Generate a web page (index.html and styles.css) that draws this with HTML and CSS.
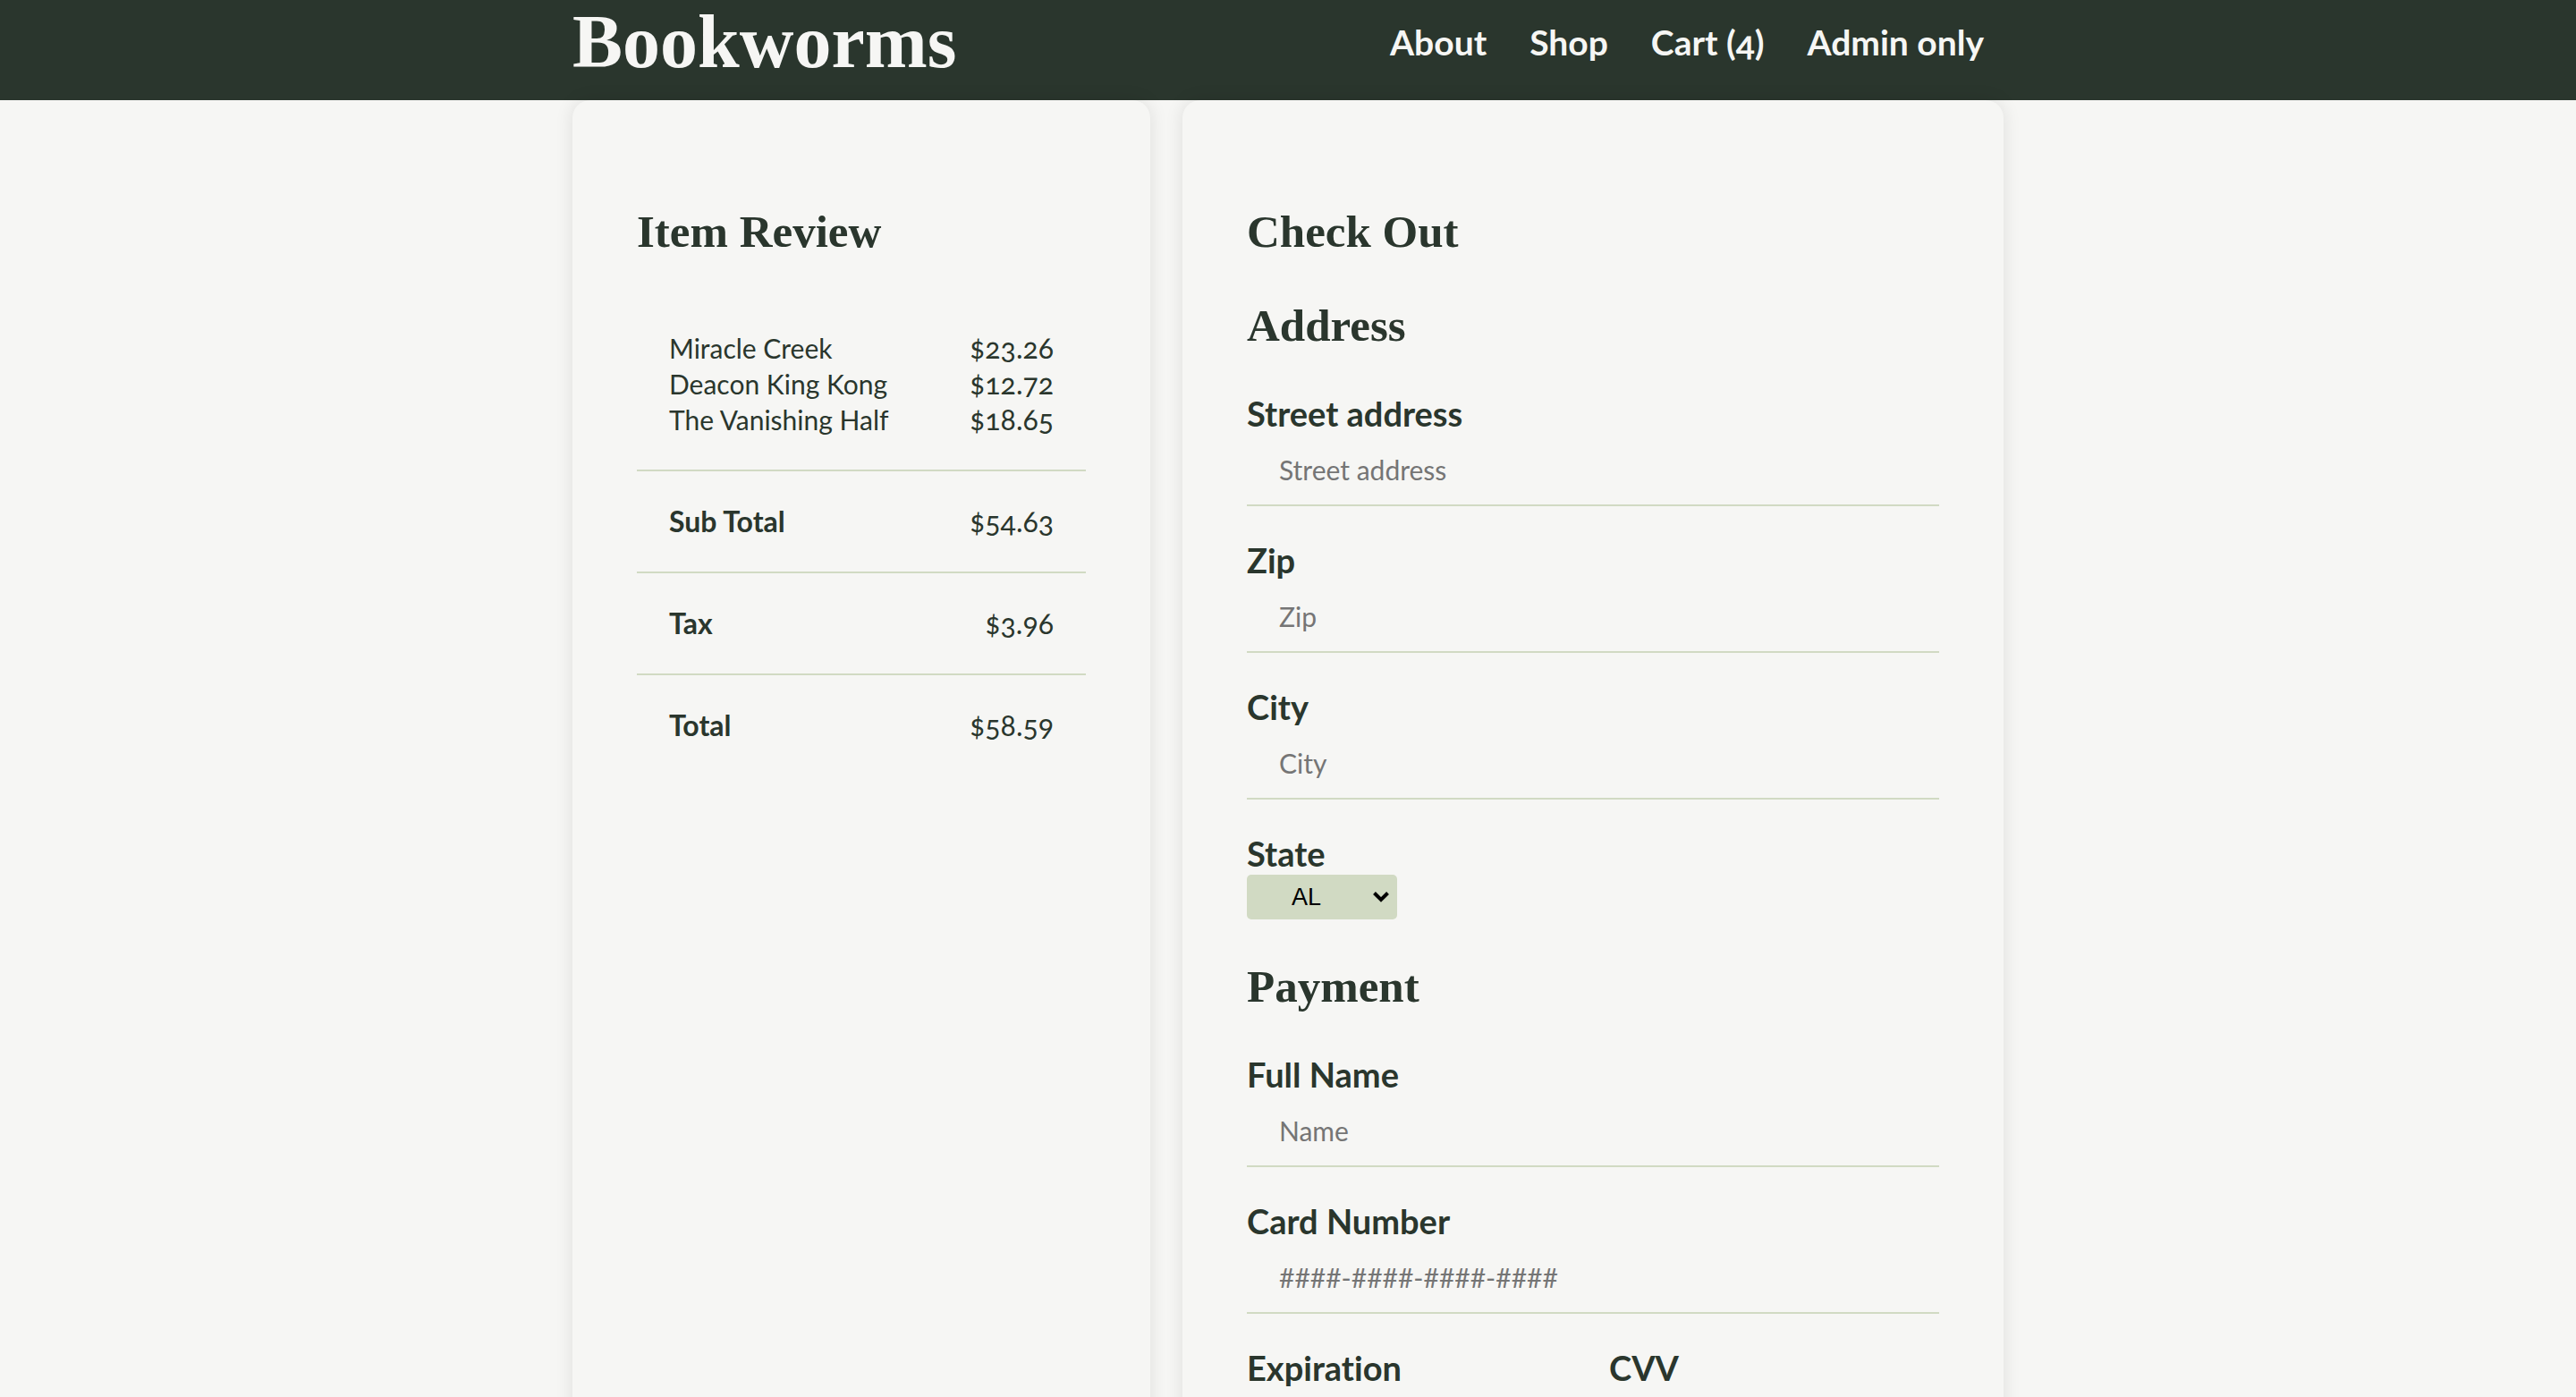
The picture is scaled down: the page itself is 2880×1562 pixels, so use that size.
FILE: index.html
```
<!DOCTYPE html>
<html lang="en">
<head>
  <meta charset="utf-8">
  <title>Bookworms</title>
  <link rel="stylesheet" href="styles.css">
</head>
<body>
  <header class="site-header">
    <div class="container header-inner">
      <h1 class="brand">Bookworms</h1>
      <nav class="site-nav">
        <a href="#about">About</a>
        <a href="#shop">Shop</a>
        <a href="#cart">Cart (4)</a>
        <a href="#admin">Admin only</a>
      </nav>
    </div>
  </header>

  <main class="container checkout">
    <section class="card review">
      <h2>Item Review</h2>
      <table class="summary">
        <tbody class="group">
          <tr><td>Miracle Creek</td><td class="price">$23.26</td></tr>
          <tr><td>Deacon King Kong</td><td class="price">$12.72</td></tr>
          <tr><td>The Vanishing Half</td><td class="price">$18.65</td></tr>
        </tbody>
        <tbody class="group">
          <tr><th scope="row">Sub Total</th><td class="price">$54.63</td></tr>
        </tbody>
        <tbody class="group">
          <tr><th scope="row">Tax</th><td class="price">$3.96</td></tr>
        </tbody>
        <tbody class="group">
          <tr><th scope="row">Total</th><td class="price">$58.59</td></tr>
        </tbody>
      </table>
    </section>

    <form class="card payment">
      <h2>Check Out</h2>

      <h2>Address</h2>
      <div class="fields">
        <div class="field">
          <label for="street">Street address</label>
          <input id="street" type="text" placeholder="Street address">
        </div>
        <div class="field">
          <label for="zip">Zip</label>
          <input id="zip" type="text" placeholder="Zip">
        </div>
        <div class="field">
          <label for="city">City</label>
          <input id="city" type="text" placeholder="City">
        </div>
        <div class="field">
          <label for="state">State</label>
          <select id="state"><option>AL</option></select>
        </div>
      </div>

      <h2>Payment</h2>
      <div class="fields">
        <div class="field">
          <label for="name">Full Name</label>
          <input id="name" type="text" placeholder="Name">
        </div>
        <div class="field">
          <label for="card">Card Number</label>
          <input id="card" type="text" placeholder="####-####-####-####">
        </div>
        <div class="field-pair">
          <div class="field">
            <label for="expiration">Expiration</label>
            <input id="expiration" type="text">
          </div>
          <div class="field">
            <label for="cvv">CVV</label>
            <input id="cvv" type="text">
          </div>
        </div>
      </div>
    </form>
  </main>
</body>
</html>
```
FILE: styles.css
```
:root {
  --green: #2a362d;
  --paper: #f6f6f4;
  --sage: #d1dac3;
  --serif: "Liberation Serif", serif;
  --sans: Lato, sans-serif;
}

* {
  box-sizing: border-box;
}

body {
  margin: 0;
  background: var(--paper);
  color: var(--green);
  font-family: var(--sans);
  font-size: 30px;
  line-height: 40px;
  font-variant-numeric: oldstyle-nums;
  font-variant-ligatures: none;
}

.container {
  width: 100%;
  max-width: 1600px;
  margin: 0 auto;
}

.site-header {
  background: var(--green);
  color: var(--paper);
  padding-bottom: 18px;
}

.header-inner {
  display: flex;
  align-items: center;
  justify-content: space-between;
}

.brand {
  margin: 0;
  font: bold 84px/94px var(--serif);
}

.site-nav {
  display: flex;
  gap: 48px;
  padding-right: 22px;
}

.site-nav a {
  color: inherit;
  font-size: 39px;
  font-weight: bold;
  line-height: 48px;
  text-decoration: none;
}

.checkout {
  display: grid;
  grid-template-columns: 646fr 918fr;
  gap: 36px;
}

.card {
  padding: 72px;
  border-radius: 20px;
  background: var(--paper);
  box-shadow: 0 0 20px rgba(0, 0, 0, 0.1);
  /* keeps the first heading's margin inside the card */
  display: flow-root;
}

h2 {
  margin: 45px 0 44px;
  font: bold 51px/60px var(--serif);
}

.summary {
  display: block;
}

.group {
  display: block;
  padding: 36px;
}

.group + .group {
  border-top: 2px solid var(--sage);
}

.group tr {
  display: flex;
  justify-content: space-between;
}

.group td,
.group th {
  padding: 0;
  text-align: left;
}

.group th,
.group .price {
  font-size: 32px;
}

.fields {
  display: grid;
  gap: 36px;
}

.field {
  display: flex;
  flex-direction: column;
  align-items: flex-start;
}

.field label {
  font-size: 38px;
  font-weight: bold;
  line-height: 48px;
}

.field input {
  width: 100%;
  height: 80px;
  padding: 0 36px;
  border: 0;
  border-bottom: 2px solid var(--sage);
  background: transparent;
  color: var(--green);
  font: 30px var(--sans);
}

.field input::placeholder {
  color: #757575;
}

.field select {
  width: 168px;
  height: 50px;
  padding: 0 36px 0 50px;
  border: 0;
  border-radius: 5px;
  appearance: none;
  background: var(--sage) url("data:image/svg+xml,%3Csvg xmlns='http://www.w3.org/2000/svg' width='18' height='12'%3E%3Cpath d='M1.5 1.5 9 9l7.5-7.5' fill='none' stroke='black' stroke-width='4'/%3E%3C/svg%3E") no-repeat right 9px center;
  color: #000;
  font: 27px "Liberation Sans", sans-serif;
}

.field-pair {
  display: grid;
  grid-template-columns: 1fr 1fr;
  gap: 36px;
}
```
